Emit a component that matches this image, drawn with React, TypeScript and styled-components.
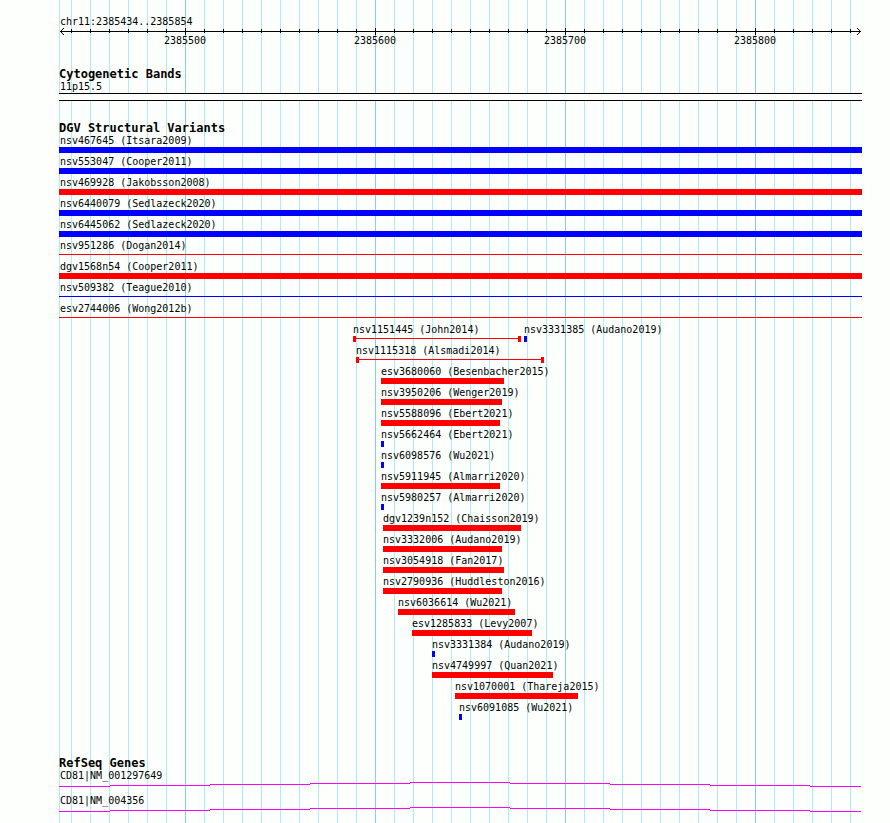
import React from "react";
import styled, { createGlobalStyle } from "styled-components";

const GlobalStyle = createGlobalStyle`
  body {
    margin: 0;
    background: #fdfffc;
    color: #000;
    font: 10px/13px "DejaVu Sans Mono", "Liberation Mono", monospace;
  }
`;

/* Width of the plotted region in drawing units; every offset below is relative to it. */
const SPAN = 803;
const pct = (n: number) => `${(n / SPAN) * 100}%`;

const Browser = styled.main`
  display: grid;
  min-height: 100vh;
  margin: 0 28px 0 59px;
`;

const scaleColumns = "12fr repeat(41, 19fr) 12fr";

const GridLines = styled.div`
  grid-area: 1 / 1;
  display: grid;
  grid-template-columns: ${scaleColumns};
`;

const GridLine = styled.div<{ $major: boolean }>`
  border-left: 1px solid ${(p) => (p.$major ? "#87ceeb" : "#afeeee")};
`;

const Tracks = styled.div`
  grid-area: 1 / 1;
  min-width: 0;
  padding-top: 15px;
  z-index: 1;
`;

const Label = styled.div<{ $start?: number }>`
  height: 13px;
  padding-left: ${(p) => pct(p.$start ?? 1)};
  white-space: nowrap;
`;

const Ruler = styled.div`
  display: grid;
  grid-template-columns: minmax(0, 1fr);
  height: 22px;
  margin-bottom: 18px;
`;

const Axis = styled.div`
  grid-area: 1 / 1;
  display: flex;
  align-items: center;
  height: 7px;
  padding: 0 1px;
`;

const AxisLine = styled.div`
  flex: 1;
  height: 1px;
  margin: 0 -3px;
  background: #000;
`;

const ArrowHead = styled.svg`
  display: block;
  width: 4px;
  height: 7px;
  shape-rendering: crispEdges;
`;

const Ticks = styled.div`
  grid-area: 1 / 1;
  display: grid;
  grid-template-columns: ${scaleColumns};
`;

const Tick = styled.div`
  display: flex;
  flex-direction: column;
  min-width: 0;
`;

const TickMark = styled.div<{ $major: boolean }>`
  width: 1px;
  height: ${(p) => (p.$major ? 7 : 4)}px;
  margin-top: ${(p) => (p.$major ? 0 : 1)}px;
  background: #000;
`;

const TickLabel = styled.span`
  display: flex;
  justify-content: center;
  width: 0;
  line-height: 11px;
  white-space: nowrap;
`;

const Track = styled.section<{ $gap: number }>`
  margin-bottom: ${(p) => p.$gap}px;
`;

const Title = styled.h2`
  margin: 0;
  font-size: 12px;
  line-height: 12px;
  font-weight: bold;
`;

const Band = styled.div`
  height: 6px;
  border: solid #000;
  border-width: 1px 0;
  background: #fdfffc;
`;

const FeatureRow = styled.div`
  display: grid;
  grid-template-columns: minmax(0, 1fr);
  height: 21px;
`;

const Feature = styled.div`
  grid-area: 1 / 1;
`;

type Shape = "bar" | "line" | "range";

const Glyph = styled.div<{ $from: number; $to: number; $color: string; $shape: Shape }>`
  box-sizing: border-box;
  height: 6px;
  margin-left: ${(p) => pct(p.$from)};
  width: ${(p) => pct(p.$to - p.$from)};
  border: solid ${(p) => p.$color};
  border-width: ${(p) => (p.$shape === "range" ? "0 3px" : "0")};
  background: linear-gradient(${(p) => p.$color}, ${(p) => p.$color}) 0
    ${(p) => (p.$shape === "bar" ? "0 / 100% 6px" : "2px / 100% 1px")} no-repeat;
`;

const GeneRow = styled.div`
  height: 25px;
`;

const GeneLine = styled.svg`
  display: block;
  width: 100%;
  height: 5px;
  fill: #f0f;
  shape-rendering: crispEdges;
`;

const BLUE = "#00f";
const RED = "#f00";

type Variant = { name: string; from: number; to: number; color: string; shape: Shape };
const v = (name: string, from: number, to: number, color: string, shape: Shape = "bar"): Variant => ({
  name,
  from,
  to,
  color,
  shape,
});

const rows: Variant[][] = [
  [v("nsv467645 (Itsara2009)", 0, 803, BLUE)],
  [v("nsv553047 (Cooper2011)", 0, 803, BLUE)],
  [v("nsv469928 (Jakobsson2008)", 0, 803, RED)],
  [v("nsv6440079 (Sedlazeck2020)", 0, 803, BLUE)],
  [v("nsv6445062 (Sedlazeck2020)", 0, 803, BLUE)],
  [v("nsv951286 (Dogan2014)", 0, 803, RED, "line")],
  [v("dgv1568n54 (Cooper2011)", 0, 803, RED)],
  [v("nsv509382 (Teague2010)", 0, 803, BLUE, "line")],
  [v("esv2744006 (Wong2012b)", 0, 803, RED, "line")],
  [v("nsv1151445 (John2014)", 294, 462, RED, "range"), v("nsv3331385 (Audano2019)", 465, 468, BLUE)],
  [v("nsv1115318 (Alsmadi2014)", 297, 485, RED, "range")],
  [v("esv3680060 (Besenbacher2015)", 322, 445, RED)],
  [v("nsv3950206 (Wenger2019)", 322, 443, RED)],
  [v("nsv5588096 (Ebert2021)", 322, 441, RED)],
  [v("nsv5662464 (Ebert2021)", 322, 325, BLUE)],
  [v("nsv6098576 (Wu2021)", 322, 325, BLUE)],
  [v("nsv5911945 (Almarri2020)", 322, 441, RED)],
  [v("nsv5980257 (Almarri2020)", 322, 325, BLUE)],
  [v("dgv1239n152 (Chaisson2019)", 324, 462, RED)],
  [v("nsv3332006 (Audano2019)", 324, 443, RED)],
  [v("nsv3054918 (Fan2017)", 324, 445, RED)],
  [v("nsv2790936 (Huddleston2016)", 324, 443, RED)],
  [v("nsv6036614 (Wu2021)", 339, 456, RED)],
  [v("esv1285833 (Levy2007)", 353, 473, RED)],
  [v("nsv3331384 (Audano2019)", 373, 376, BLUE)],
  [v("nsv4749997 (Quan2021)", 373, 494, RED)],
  [v("nsv1070001 (Thareja2015)", 396, 519, RED)],
  [v("nsv6091085 (Wu2021)", 400, 403, BLUE)],
];

const genes = ["CD81|NM_001297649", "CD81|NM_004356"];
const intron = [
  [0, 51, 4],
  [51, 151, 3],
  [151, 251, 2],
  [251, 351, 1],
  [351, 451, 0],
  [451, 551, 1],
  [551, 651, 2],
  [651, 751, 3],
  [751, 802, 4],
];

/* Column 0 is the left edge; columns 1 to 42 fall on every tenth base from 2385440. */
const columns = Array.from({ length: 43 }, (_, i) => i);
const isMajor = (i: number) => i > 0 && i % 10 === 7;

export default function App() {
  return (
    <>
      <GlobalStyle />
      <Browser>
        <GridLines aria-hidden="true">
          {columns.map((i) => (
            <GridLine key={i} $major={isMajor(i)} />
          ))}
        </GridLines>
        <Tracks>
          <Label>chr11:2385434..2385854</Label>
          <Ruler>
            <Axis>
              <ArrowHead viewBox="0 0 4 7">
                <path d="M3 0h1v1h-1zM2 1h1v1h-1zM1 2h1v1h-1zM0 3h1v1h-1zM1 4h1v1h-1zM2 5h1v1h-1zM3 6h1v1h-1z" />
              </ArrowHead>
              <AxisLine />
              <ArrowHead viewBox="0 0 4 7">
                <path d="M0 0h1v1h-1zM1 1h1v1h-1zM2 2h1v1h-1zM3 3h1v1h-1zM2 4h1v1h-1zM1 5h1v1h-1zM0 6h1v1h-1z" />
              </ArrowHead>
            </Axis>
            <Ticks>
              {columns.map((i) => (
                <Tick key={i}>
                  {i > 0 && <TickMark $major={isMajor(i)} />}
                  {isMajor(i) && <TickLabel>{2385430 + i * 10}</TickLabel>}
                </Tick>
              ))}
            </Ticks>
          </Ruler>
          <Track $gap={21}>
            <Title>Cytogenetic Bands</Title>
            <Label>11p15.5</Label>
            <Band />
          </Track>
          <Track $gap={35}>
            <Title>DGV Structural Variants</Title>
            {rows.map((row) => (
              <FeatureRow key={row[0].name}>
                {row.map((f) => (
                  <Feature key={f.name}>
                    <Label $start={f.from === 0 ? 1 : f.from}>{f.name}</Label>
                    <Glyph $from={f.from} $to={f.to} $color={f.color} $shape={f.shape} />
                  </Feature>
                ))}
              </FeatureRow>
            ))}
          </Track>
          <Track $gap={0}>
            <Title>RefSeq Genes</Title>
            {genes.map((name) => (
              <GeneRow key={name}>
                <Label>{name}</Label>
                <GeneLine viewBox="0 0 803 5" preserveAspectRatio="none">
                  {intron.map(([from, to, y]) => (
                    <rect key={from} x={from} y={y} width={to - from} height={1} />
                  ))}
                </GeneLine>
              </GeneRow>
            ))}
          </Track>
        </Tracks>
      </Browser>
    </>
  );
}
